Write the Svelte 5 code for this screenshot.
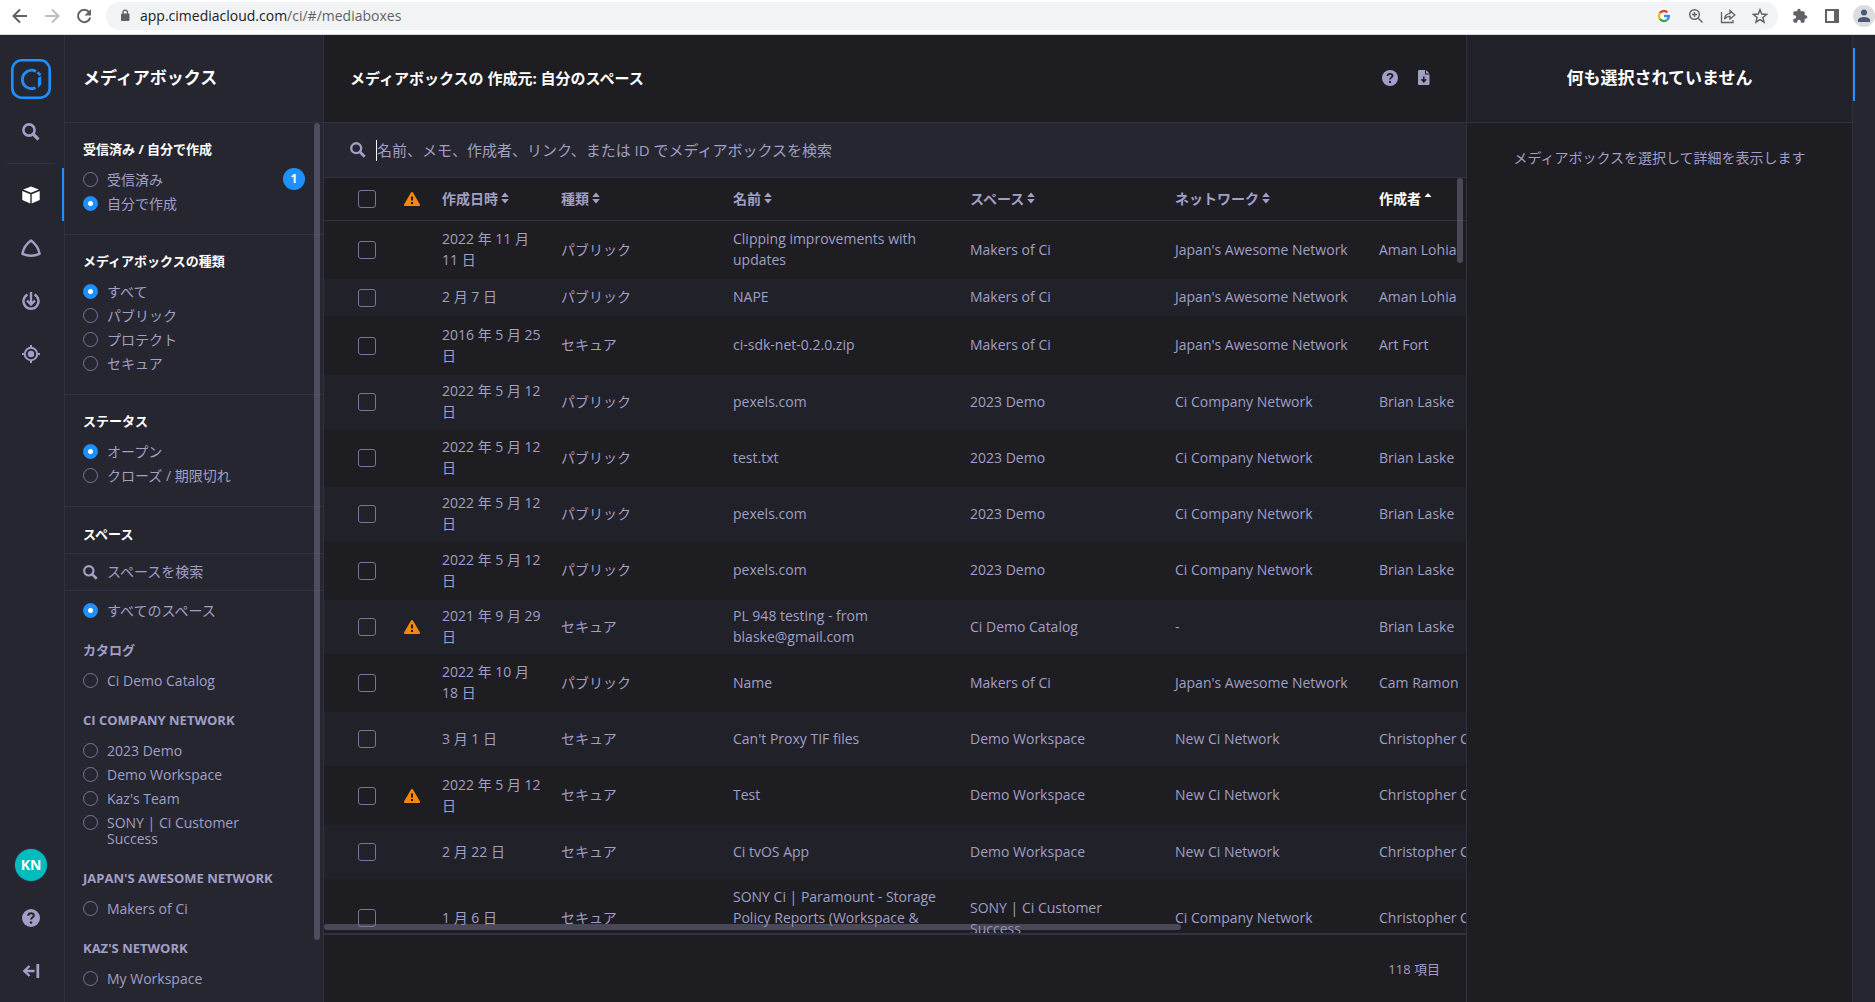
<script lang="ts">
    type Row = {
        date: string;
        kind: string;
        name: string;
        space: string;
        network: string;
        author: string;
        warn?: boolean;
        compact?: boolean;
    };

    let space = "all";
    let spaceQuery = "";
    let query = "";
    let selected: Record<string, string> = { direction: "created", kind: "all", status: "open" };

    const groups = [
        {
            title: "受信済み / 自分で作成",
            name: "direction",
            options: [
                { value: "received", label: "受信済み", count: 1 },
                { value: "created", label: "自分で作成", count: 0 }
            ]
        },
        {
            title: "メディアボックスの種類",
            name: "kind",
            options: [
                { value: "all", label: "すべて", count: 0 },
                { value: "public", label: "パブリック", count: 0 },
                { value: "protected", label: "プロテクト", count: 0 },
                { value: "secure", label: "セキュア", count: 0 }
            ]
        },
        {
            title: "ステータス",
            name: "status",
            options: [
                { value: "open", label: "オープン", count: 0 },
                { value: "closed", label: "クローズ / 期限切れ", count: 0 }
            ]
        }
    ];

    const networks = [
        { title: "カタログ", spaces: ["Ci Demo Catalog"] },
        {
            title: "Ci Company Network",
            spaces: ["2023 Demo", "Demo Workspace", "Kaz's Team", "SONY | Ci Customer Success"]
        },
        { title: "Japan's Awesome Network", spaces: ["Makers of Ci"] },
        { title: "Kaz's Network", spaces: ["My Workspace"] }
    ];

    const columns = [
        { key: "date", label: "作成日時" },
        { key: "kind", label: "種類" },
        { key: "name", label: "名前" },
        { key: "space", label: "スペース" },
        { key: "network", label: "ネットワーク" },
        { key: "author", label: "作成者", sorted: true }
    ];

    const rows: Row[] = [
        { date: "2022 年 11 月 11 日", kind: "パブリック", name: "Clipping improvements with updates", space: "Makers of Ci", network: "Japan's Awesome Network", author: "Aman Lohia" },
        { date: "2 月 7 日", kind: "パブリック", name: "NAPE", space: "Makers of Ci", network: "Japan's Awesome Network", author: "Aman Lohia", compact: true },
        { date: "2016 年 5 月 25 日", kind: "セキュア", name: "ci-sdk-net-0.2.0.zip", space: "Makers of Ci", network: "Japan's Awesome Network", author: "Art Fort" },
        { date: "2022 年 5 月 12 日", kind: "パブリック", name: "pexels.com", space: "2023 Demo", network: "Ci Company Network", author: "Brian Laske" },
        { date: "2022 年 5 月 12 日", kind: "パブリック", name: "test.txt", space: "2023 Demo", network: "Ci Company Network", author: "Brian Laske" },
        { date: "2022 年 5 月 12 日", kind: "パブリック", name: "pexels.com", space: "2023 Demo", network: "Ci Company Network", author: "Brian Laske" },
        { date: "2022 年 5 月 12 日", kind: "パブリック", name: "pexels.com", space: "2023 Demo", network: "Ci Company Network", author: "Brian Laske" },
        { date: "2021 年 9 月 29 日", kind: "セキュア", name: "PL 948 testing - from blaske@gmail.com", space: "Ci Demo Catalog", network: "-", author: "Brian Laske", warn: true },
        { date: "2022 年 10 月 18 日", kind: "パブリック", name: "Name", space: "Makers of Ci", network: "Japan's Awesome Network", author: "Cam Ramon" },
        { date: "3 月 1 日", kind: "セキュア", name: "Can't Proxy TIF files", space: "Demo Workspace", network: "New Ci Network", author: "Christopher C" },
        { date: "2022 年 5 月 12 日", kind: "セキュア", name: "Test", space: "Demo Workspace", network: "New Ci Network", author: "Christopher C", warn: true },
        { date: "2 月 22 日", kind: "セキュア", name: "Ci tvOS App", space: "Demo Workspace", network: "New Ci Network", author: "Christopher C" },
        { date: "1 月 6 日", kind: "セキュア", name: "SONY Ci | Paramount - Storage Policy Reports (Workspace & Network Level)", space: "SONY | Ci Customer Success", network: "Ci Company Network", author: "Christopher C" }
    ];
</script>

<div class="window">
    <header class="chrome">
        <button class="tool" aria-label="Back">
            <svg width="16" height="16" viewBox="0 0 16 16" fill="none" stroke="#5f6368" stroke-width="2"><path d="M15 8H2.5M8 1.5 1.5 8 8 14.5" /></svg>
        </button>
        <button class="tool" aria-label="Forward">
            <svg width="16" height="16" viewBox="0 0 16 16" fill="none" stroke="#bdbfc2" stroke-width="2"><path d="M1 8h12.5M8 1.5 14.5 8 8 14.5" /></svg>
        </button>
        <button class="tool" aria-label="Reload">
            <svg width="16" height="16" viewBox="0 0 16 16" fill="none" stroke="#5f6368" stroke-width="2"><path d="M13 4A6.2 6.2 0 1 0 14.2 9.5" /><path fill="#5f6368" stroke="none" d="M15 1v6.5H8.5z" /></svg>
        </button>
        <div class="address">
            <svg class="lock" width="10" height="13" viewBox="0 0 10 13"><rect x="1" y="4.5" width="8.5" height="7.5" rx="1" fill="#5f6368" /><path d="M3 5V3.3a2.2 2.2 0 0 1 4.5 0V5" fill="none" stroke="#5f6368" stroke-width="1.3" /></svg>
            <span class="url">app.cimediacloud.com<span class="path">/ci/#/mediaboxes</span></span>
            <button class="tool" aria-label="Google">
                <svg width="16" height="16" viewBox="0 0 16 16" fill="none" stroke-width="2.4">
                    <circle cx="8" cy="8" r="8" fill="#fff" />
                    <path stroke="#ea4335" d="M3.8 5.2A4.9 4.9 0 0 1 11.5 4.5" />
                    <path stroke="#fbbc05" d="M3.8 5.2a5 5 0 0 0 0 5.6" />
                    <path stroke="#34a853" d="M3.8 10.8a4.9 4.9 0 0 0 7.3 1" />
                    <path stroke="#4285f4" d="M11.1 11.8A4.9 4.9 0 0 0 12.9 8H8" />
                </svg>
            </button>
            <button class="tool" aria-label="Zoom">
                <svg width="16" height="16" viewBox="0 0 16 16" fill="none" stroke="#5f6368" stroke-width="1.4"><circle cx="6.5" cy="6.5" r="4.8" /><path d="m10 10 4.5 4.5M6.5 4v5M4 6.5h5" /></svg>
            </button>
            <button class="tool" aria-label="Share">
                <svg width="16" height="16" viewBox="0 0 16 16" fill="none" stroke="#5f6368" stroke-width="1.3"><path d="M1.5 4v10.5h11.5V12M4.500 11c.5-3.500 2.500-5.200 5.500-5.300V2.500L14.800 7 10 11V8.300c-2.500 0-4.200.9-5.500 2.700z" /></svg>
            </button>
            <button class="tool" aria-label="Bookmark">
                <svg width="16" height="16" viewBox="0 0 16 16" fill="none" stroke="#5f6368" stroke-width="1.5"><path d="m8 1.800 1.800 4.300 4.700.4-3.600 3 1.100 4.600L8 11.700l-4 2.400 1.100-4.600-3.600-3 4.700-.4z" /></svg>
            </button>
        </div>
        <button class="tool" aria-label="Extensions">
            <svg width="16" height="16" viewBox="0 0 24 24" fill="#5f6368"><path d="M20.500 11H19V7a2 2 0 0 0-2-2h-4V3.500a2.500 2.500 0 0 0-5 0V5H4a2 2 0 0 0-2 2v3.800h1.500a2.700 2.700 0 0 1 0 5.400H2V20a2 2 0 0 0 2 2h3.800v-1.500a2.700 2.700 0 0 1 5.400 0V22H17a2 2 0 0 0 2-2v-4h1.500a2.500 2.500 0 0 0 0-5z" /></svg>
        </button>
        <button class="tool" aria-label="Side panel">
            <svg width="14" height="14" viewBox="0 0 14 14"><path fill="#5f6368" fill-rule="evenodd" d="M0 0h14v14H0zM2 2v10h7V2z" /></svg>
        </button>
        <button class="tool profile" aria-label="Profile">
            <svg width="22" height="22" viewBox="0 0 22 22"><circle cx="11" cy="11" r="11" fill="#dadce0" /><circle cx="11" cy="7.500" r="3" fill="#4b5a70" /><path fill="#4b5a70" d="M5 17v-2c0-2 3.500-3 6-3s6 1 6 3v2z" /></svg>
        </button>
    </header>

    <div class="app">
        <nav class="rail">
            <a class="logo" href="#home" aria-label="Ci">
                <svg width="40" height="40" viewBox="0 0 40 40" fill="none" stroke="#1e90ff"><rect x="1.300" y="1.300" width="37.400" height="37.400" rx="9.500" stroke-width="2.600" /><path stroke-width="2.800" d="M25 12.400A9.200 9.200 0 1 0 24.500 28.800" /><path stroke="none" fill="#1e90ff" d="m27.200 12.200 3 2.800-1.400 2.300-3-2.700zM27 18.800l3.200-1.600v8.300L27 29z" /></svg>
            </a>
            <a class="item" href="#search" aria-label="Search">
                <svg width="18" height="18" viewBox="0 0 18 18" fill="none" stroke="currentColor"><circle cx="7" cy="7" r="5.600" stroke-width="2.600" /><path stroke-width="3.200" d="m11.200 11.200 5.300 5.300" /></svg>
            </a>
            <hr />
            <a class="item active" href="#mediaboxes" aria-label="MediaBoxes">
                <svg width="18" height="18" viewBox="0 0 18 18" fill="currentColor"><path d="M9 .4 16.800 3.600 9 6.800 1.200 3.600zM.3 5l8 3.300v9.200L.3 14zM17.700 5l-8 3.300v9.200l8-3.500z" /></svg>
            </a>
            <a class="item" href="#workflow" aria-label="Workflow">
                <svg width="20" height="18" viewBox="0 0 20 18" fill="none" stroke="currentColor" stroke-width="2.400" stroke-linejoin="round"><path d="M10 1.500c4 2.800 7.500 7.500 8.600 13.300-5 2.200-12.200 2.200-17.200 0C2.500 9 6 4.300 10 1.500z" /></svg>
            </a>
            <a class="item" href="#downloads" aria-label="Downloads">
                <svg width="18" height="18" viewBox="0 0 18 18" fill="none" stroke="currentColor" stroke-width="2.400"><path d="M5.500 2.600a7.500 7.500 0 1 0 7 0M9 0v12M5 8.500l4 4 4-4" /></svg>
            </a>
            <a class="item" href="#target" aria-label="Target">
                <svg width="18" height="18" viewBox="0 0 18 18" fill="none" stroke="currentColor" stroke-width="2"><circle cx="9" cy="9" r="6.200" /><circle cx="9" cy="9" r="3.200" fill="currentColor" stroke="none" /><path d="M9 0v3M9 15v3M0 9h3M15 9h3" /></svg>
            </a>
            <div class="grow"></div>
            <a class="item" href="#profile"><span class="avatar">KN</span></a>
            <a class="item" href="#help" aria-label="Help">
                <svg width="18" height="18" viewBox="0 0 18 18"><circle cx="9" cy="9" r="9" fill="currentColor" /><path d="M6.200 6.800C6.300 5.300 7.500 4.300 9 4.300s2.800.9 2.800 2.300c0 1.900-2.800 2-2.800 4" fill="none" stroke="#262630" stroke-width="2" /><circle cx="9" cy="13.500" r="1.300" fill="#262630" /></svg>
            </a>
            <a class="item" href="#collapse" aria-label="Collapse">
                <svg width="18" height="14" viewBox="0 0 18 14" fill="none" stroke="currentColor" stroke-width="2.400"><path d="M12.500 7H2.500M7.500 2 2.300 7l5.200 5" /><path stroke-width="2.800" d="M15.800 0v14" /></svg>
            </a>
        </nav>

        <aside class="filters">
            <h1 class="head">メディアボックス</h1>
            <div class="scroll">
                {#each groups as group}
                    <section>
                        <h2>{group.title}</h2>
                        {#each group.options as option}
                            <label class="option">
                                <input type="radio" name={group.name} value={option.value} bind:group={selected[group.name]} />
                                <span class="text">{option.label}</span>
                                {#if option.count}<span class="badge">{option.count}</span>{/if}
                            </label>
                        {/each}
                    </section>
                {/each}
                <section class="spaces">
                    <h2>スペース</h2>
                    <label class="find">
                        <svg width="15" height="15" viewBox="0 0 18 18" fill="none" stroke="currentColor"><circle cx="7" cy="7" r="5.600" stroke-width="2.600" /><path stroke-width="3.200" d="m11.200 11.200 5.300 5.300" /></svg>
                        <input type="text" placeholder="スペースを検索" aria-label="スペースを検索" bind:value={spaceQuery} />
                    </label>
                    <div class="list">
                        <label class="option">
                            <input type="radio" name="space" value="all" bind:group={space} />
                            <span class="text">すべてのスペース</span>
                        </label>
                        {#each networks as network}
                            <h3>{network.title}</h3>
                            {#each network.spaces as item}
                                <label class="option">
                                    <input type="radio" name="space" value={item} bind:group={space} />
                                    <span class="text">{item}</span>
                                </label>
                            {/each}
                        {/each}
                    </div>
                </section>
                <div class="thumb side"></div>
            </div>
        </aside>

        <main>
            <div class="head">
                <h1>メディアボックスの 作成元: 自分のスペース</h1>
                <button class="action" aria-label="ヘルプ">
                    <svg width="16" height="16" viewBox="0 0 18 18"><circle cx="9" cy="9" r="9" fill="currentColor" /><path d="M6.200 6.800C6.300 5.300 7.500 4.300 9 4.300s2.800.9 2.800 2.300c0 1.900-2.800 2-2.800 4" fill="none" stroke="#1e1d22" stroke-width="2" /><circle cx="9" cy="13.500" r="1.300" fill="#1e1d22" /></svg>
                </button>
                <button class="action" aria-label="エクスポート">
                    <svg width="12" height="15" viewBox="0 0 12 15" fill="currentColor"><path d="M1 0h6v4.500h4.500V14a1 1 0 0 1-1 1H1a1 1 0 0 1-1-1V1a1 1 0 0 1 1-1z" /><path d="M8 0v3.500h3.500z" /><path d="M5.800 6.500v5M3.500 9.300l2.300 2.500 2.300-2.500" fill="none" stroke="#1e1d22" stroke-width="1.600" /></svg>
                </button>
            </div>
            <label class="search">
                <svg width="16" height="16" viewBox="0 0 18 18" fill="none" stroke="currentColor"><circle cx="7" cy="7" r="5.600" stroke-width="2.600" /><path stroke-width="3.200" d="m11.200 11.200 5.300 5.300" /></svg>
                <span class="caret"></span>
                <input type="text" placeholder="名前、メモ、作成者、リンク、または ID でメディアボックスを検索" aria-label="メディアボックスを検索" bind:value={query} />
            </label>

            <div class="grid">
                <table>
                    <colgroup>
                        <col class="c-check" />
                        <col class="c-warn" />
                        {#each columns as column}
                            <col class="c-{column.key}" />
                        {/each}
                    </colgroup>
                    <thead>
                        <tr>
                            <th class="check"><input type="checkbox" aria-label="すべて選択" /></th>
                            <th class="warn">
                                <svg width="16" height="14" viewBox="0 0 16 14"><path d="M8 0c.5 0 .8.200 1 .6l6.800 11.700c.5.800 0 1.700-1 1.700H1.200c-1 0-1.500-.9-1-1.700L7 .6c.2-.4.500-.6 1-.6z" fill="#f5870a" /><path d="M8 4.500v4M8 10v2" stroke="#1e1d22" stroke-width="2" /></svg>
                            </th>
                            {#each columns as column}
                                <th class:sorted={column.sorted} aria-sort={column.sorted ? "ascending" : "none"}>
                                    <button class="sort">
                                        {column.label}
                                        {#if column.sorted}
                                            <svg width="8" height="12" viewBox="0 0 8 12" fill="currentColor"><path d="M4 1 7.500 5H.5z" /></svg>
                                        {:else}
                                            <svg width="8" height="12" viewBox="0 0 8 12" fill="currentColor"><path d="M4 .5 7.800 5H.2zM4 11.500 7.800 7H.2z" /></svg>
                                        {/if}
                                    </button>
                                </th>
                            {/each}
                        </tr>
                    </thead>
                    <tbody>
                        {#each rows as row}
                            <tr class:compact={row.compact}>
                                <td class="check"><input type="checkbox" aria-label={row.name} /></td>
                                <td class="warn">
                                    {#if row.warn}
                                        <svg width="16" height="14" viewBox="0 0 16 14"><path d="M8 0c.5 0 .8.200 1 .6l6.800 11.700c.5.800 0 1.700-1 1.700H1.200c-1 0-1.500-.9-1-1.700L7 .6c.2-.4.500-.6 1-.6z" fill="#f5870a" /><path d="M8 4.500v4M8 10v2" stroke="#1e1d22" stroke-width="2" /></svg>
                                    {/if}
                                </td>
                                <td>{row.date}</td>
                                <td>{row.kind}</td>
                                <td>{row.name}</td>
                                <td class="space">{row.space}</td>
                                <td>{row.network}</td>
                                <td>{row.author}</td>
                            </tr>
                        {/each}
                    </tbody>
                </table>
                <div class="thumb down"></div>
                <div class="thumb across"></div>
            </div>
            <footer>118 項目</footer>
        </main>

        <aside class="details">
            <h1 class="head">何も選択されていません</h1>
            <p>メディアボックスを選択して詳細を表示します</p>
        </aside>
        <div class="edge"></div>
    </div>
</div>

<style>
    :global(body) {
        overflow: hidden;
    }

    .window {
        --panel: #262630;
        --base: #1e1d22;
        --alt: #202129;
        --line: #323144;
        --text: #a09fc6;
        --blue: #1e90ff;
        display: flex;
        flex-direction: column;
        height: 100vh;
        color: var(--text);
        font-family: "Open Sans", "Noto Sans CJK JP", sans-serif;
        font-size: 14px;
        line-height: 20px;
    }

    .window * {
        box-sizing: border-box;
    }

    h1,
    h2,
    h3,
    p {
        margin: 0;
    }

    button {
        display: flex;
        align-items: center;
        justify-content: center;
        padding: 0;
        border: 0;
        background: none;
        color: inherit;
        font: inherit;
    }

    input {
        margin: 0;
    }

    svg {
        display: block;
        flex: none;
    }

    /* browser bar */
    .chrome {
        display: flex;
        align-items: center;
        flex: none;
        height: 35px;
        padding: 0 0 3px 4px;
        border-bottom: 1px solid #d5d7db;
        background: #fff;
    }

    .tool {
        flex: none;
        width: 32px;
        height: 28px;
    }

    .address {
        display: flex;
        align-items: center;
        flex: 1;
        height: 28px;
        margin: 0 6px;
        padding: 0 2px 0 14px;
        border-radius: 14px;
        background: #f1f3f4;
    }

    .url {
        flex: 1;
        margin-left: 10px;
        color: #202124;
    }

    .url .path {
        color: #5f6368;
    }

    .profile {
        width: 22px;
        margin-left: 5px;
    }

    .app {
        display: flex;
        flex: 1;
        min-height: 0;
        background: var(--base);
    }

    /* icon rail */
    .rail {
        display: flex;
        flex-direction: column;
        align-items: center;
        flex: none;
        width: 65px;
        padding: 24px 2px 5px 0;
        border-right: 1px solid var(--line);
        background: var(--panel);
    }

    .rail hr {
        width: 48px;
        height: 1px;
        margin: 5px 0 4px;
        border: 0;
        background: var(--line);
    }

    .logo {
        margin-bottom: 6px;
    }

    .item {
        position: relative;
        display: flex;
        align-items: center;
        justify-content: center;
        flex: none;
        width: 62px;
        height: 53px;
        color: var(--text);
        text-decoration: none;
    }

    .item.active {
        color: #fff;
    }

    .item.active::after {
        content: "";
        position: absolute;
        top: 0;
        right: -2px;
        bottom: 0;
        width: 2px;
        background: var(--blue);
    }

    .grow {
        flex: 1;
    }

    .avatar {
        width: 32px;
        height: 32px;
        border-radius: 50%;
        background: #00bcbc;
        box-shadow: 0 0 0 1px var(--line);
        color: #fff;
        font-weight: 700;
        line-height: 32px;
        text-align: center;
    }

    /* filters */
    .head {
        display: flex;
        align-items: center;
        flex: none;
        height: 88px;
        padding-bottom: 2px;
        border-bottom: 1px solid var(--line);
        color: #fff;
        font-size: 17px;
        font-weight: 700;
    }

    .filters {
        display: flex;
        flex-direction: column;
        flex: none;
        width: 259px;
        border-right: 1px solid var(--line);
        background: var(--panel);
    }

    .filters .head {
        padding-left: 18px;
    }

    .scroll {
        position: relative;
        flex: 1;
        min-height: 0;
        overflow: hidden;
    }

    section {
        padding: 16px 18px 18px;
        border-bottom: 1px solid var(--line);
    }

    h2 {
        margin-bottom: 9px;
        color: #fff;
        font-size: 13px;
        font-weight: 700;
        line-height: 20px;
    }

    h3 {
        margin: 17px 0 9px;
        font-size: 13px;
        font-weight: 700;
        line-height: 20px;
        text-transform: uppercase;
    }

    .option {
        position: relative;
        display: flex;
        align-items: flex-start;
        gap: 9px;
        padding: 4px 0;
        line-height: 16px;
    }

    .option .text {
        max-width: 150px;
    }

    .option input {
        appearance: none;
        flex: none;
        width: 15px;
        height: 15px;
        border: 1px solid #77759b;
        border-radius: 50%;
    }

    .option input:checked {
        border-color: var(--blue);
        background: radial-gradient(circle, #fff 2px, var(--blue) 3px);
    }

    .badge {
        position: absolute;
        top: 0;
        right: 0;
        width: 22px;
        height: 22px;
        border-radius: 50%;
        background: var(--blue);
        color: #fff;
        font-size: 12px;
        font-weight: 700;
        line-height: 22px;
        text-align: center;
    }

    .spaces {
        padding: 17px 0 0;
        border: 0;
    }

    .spaces h2 {
        padding-left: 18px;
    }

    .find {
        display: flex;
        align-items: center;
        gap: 9px;
        height: 38px;
        padding: 0 18px;
        border: solid var(--line);
        border-width: 1px 0;
    }

    .list {
        padding: 8px 18px;
    }

    .find input,
    .search input {
        flex: 1;
        min-width: 0;
        padding: 0;
        border: 0;
        outline: 0;
        background: none;
        color: #fff;
        font: inherit;
    }

    .find input::placeholder,
    .search input::placeholder {
        color: var(--text);
        opacity: 1;
    }

    /* overlay scrollbars */
    .thumb {
        position: absolute;
        border-radius: 3px;
        background: rgba(128, 124, 152, 0.45);
    }

    .thumb.side {
        top: 0;
        right: 3px;
        width: 6px;
        height: 93%;
    }

    .thumb.down {
        top: 0;
        right: 3px;
        width: 6px;
        height: 85px;
    }

    .thumb.across {
        left: 0;
        bottom: 3px;
        width: 75%;
        height: 6px;
    }

    /* list of mediaboxes */
    main {
        display: flex;
        flex-direction: column;
        flex: 1;
        min-width: 0;
    }

    main .head {
        padding: 0 25px 2px 26px;
    }

    main h1 {
        flex: 1;
        font-size: 15px;
    }

    .action {
        width: 34px;
        height: 34px;
        color: var(--text);
    }

    .search {
        display: flex;
        align-items: center;
        flex: none;
        height: 55px;
        padding: 0 26px;
        border-bottom: 1px solid var(--line);
        background: var(--panel);
        font-size: 15px;
    }

    .caret {
        width: 1px;
        height: 21px;
        margin-left: 10px;
        background: #fff;
    }

    .grid {
        position: relative;
        flex: 1;
        min-height: 0;
        overflow: hidden;
    }

    table {
        width: 1513px;
        table-layout: fixed;
        border-collapse: separate;
        border-spacing: 0;
        line-height: 21px;
    }

    .c-check {
        width: 66px;
    }

    .c-warn {
        width: 52px;
    }

    .c-date {
        width: 119px;
    }

    .c-kind {
        width: 172px;
    }

    .c-name {
        width: 237px;
    }

    .c-space {
        width: 205px;
    }

    .c-network {
        width: 204px;
    }

    th,
    td {
        padding: 0 16px 2px 0;
        text-align: left;
        vertical-align: middle;
    }

    td.space {
        padding-right: 24px;
    }

    th {
        height: 43px;
        border-bottom: 1px solid var(--line);
        font-weight: 700;
    }

    td {
        height: 58px;
    }

    tr:nth-child(4n + 3) td {
        height: 59px;
    }

    tbody tr:nth-child(even) {
        background: var(--alt);
    }

    tr:nth-child(even) td {
        height: 54px;
    }

    tr.compact:nth-child(even) td {
        height: 37px;
    }

    tr:last-child td {
        padding-top: 7px;
        padding-bottom: 9px;
    }

    th.sorted {
        color: #fff;
    }

    .check {
        padding: 0 0 0 34px;
    }

    .warn {
        padding: 0 0 0 14px;
    }

    .check input {
        appearance: none;
        display: block;
        width: 18px;
        height: 18px;
        border: 1px solid #77759b;
        border-radius: 3px;
    }

    .sort {
        gap: 3px;
    }

    footer {
        display: flex;
        align-items: center;
        justify-content: flex-end;
        flex: none;
        height: 69px;
        padding-right: 26px;
        border-top: 2px solid var(--line);
        font-size: 13px;
    }

    /* details */
    .details {
        flex: none;
        width: 387px;
        border: solid var(--line);
        border-width: 0 1px;
        text-align: center;
    }

    .details .head {
        justify-content: center;
        background: var(--alt);
    }

    .details p {
        padding: 25px 20px;
    }

    .edge {
        flex: none;
        width: 22px;
        background: var(--panel);
    }

    .edge::before {
        content: "";
        display: block;
        width: 2px;
        height: 53px;
        margin-top: 13px;
        background: var(--blue);
    }
</style>
